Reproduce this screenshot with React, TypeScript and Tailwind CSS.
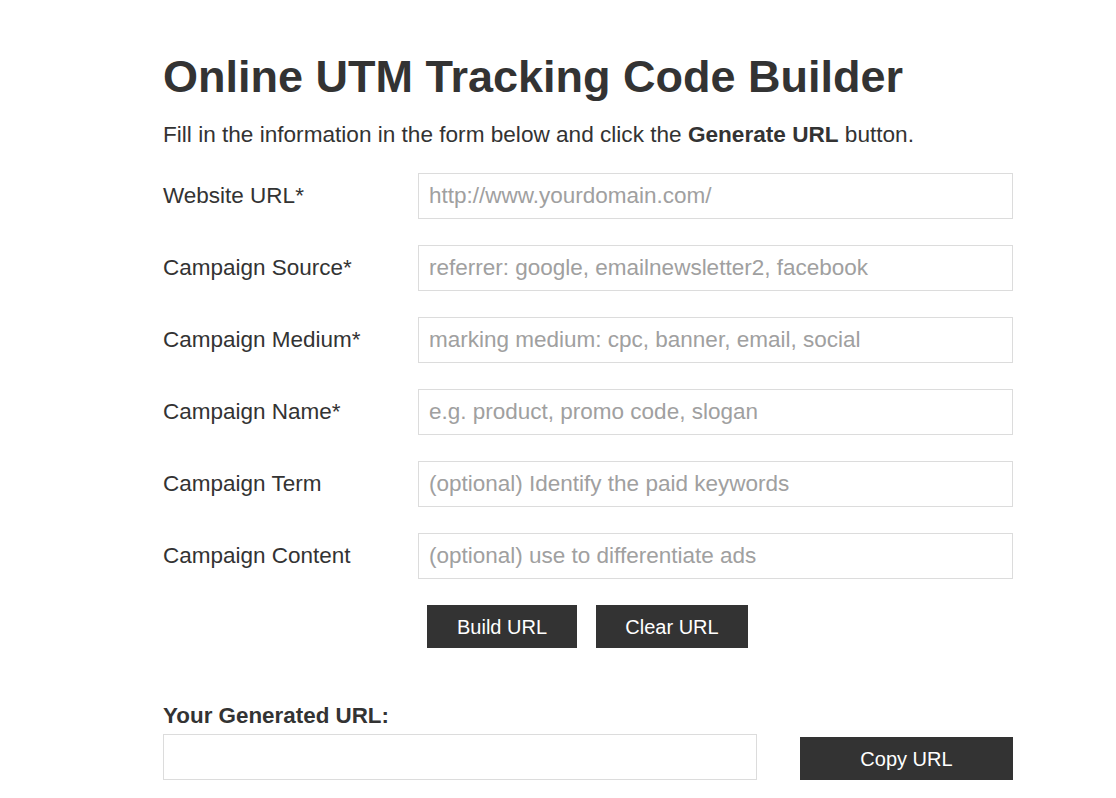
import React from "react";

const fields = [
  { label: "Website URL*", ph: "http://www.yourdomain.com/" },
  { label: "Campaign Source*", ph: "referrer: google, emailnewsletter2, facebook" },
  { label: "Campaign Medium*", ph: "marking medium: cpc, banner, email, social" },
  { label: "Campaign Name*", ph: "e.g. product, promo code, slogan" },
  { label: "Campaign Term", ph: "(optional) Identify the paid keywords" },
  { label: "Campaign Content", ph: "(optional) use to differentiate ads" },
];

export default function App() {
  return (
    <div
      className="min-h-[798px] bg-white text-[#333]"
      style={{ fontFamily: '"Liberation Sans", Arial, Helvetica, sans-serif' }}
    >
      <div className="ml-[163px] w-[850px] pt-[51px]">
        <h1 className="text-[45px] font-bold leading-[52px]">
          Online UTM Tracking Code Builder
        </h1>
        <p className="mt-[20px] text-[22.6px] leading-[24px]">
          Fill in the information in the form below and click the <b>Generate URL</b> button.
        </p>
        <div className="mt-[26px] flex flex-col gap-[26px]">
          {fields.map((f) => (
            <div key={f.label} className="flex items-center">
              <label className="w-[255px] text-[22.5px]">{f.label}</label>
              <input
                className="h-[46px] w-[595px] border border-[#dcdcdc] px-[10px] text-[22.5px] text-[#333] outline-none placeholder:text-[#a0a0a0]"
                placeholder={f.ph}
              />
            </div>
          ))}
        </div>
        <div className="mt-[26px] ml-[264px] flex gap-[19px]">
          <button className="h-[43px] w-[150px] bg-[#333] text-[20px] text-white">Build URL</button>
          <button className="h-[43px] w-[152px] bg-[#333] text-[20px] text-white">Clear URL</button>
        </div>
        <div className="mt-[55px] text-[22.4px] font-bold leading-[26px]">Your Generated URL:</div>
        <div className="mt-[5px] flex items-end justify-between">
          <input className="h-[46px] w-[594px] border border-[#dcdcdc] outline-none" />
          <button className="h-[43px] w-[213px] bg-[#333] text-[20px] text-white">Copy URL</button>
        </div>
      </div>
    </div>
  );
}
